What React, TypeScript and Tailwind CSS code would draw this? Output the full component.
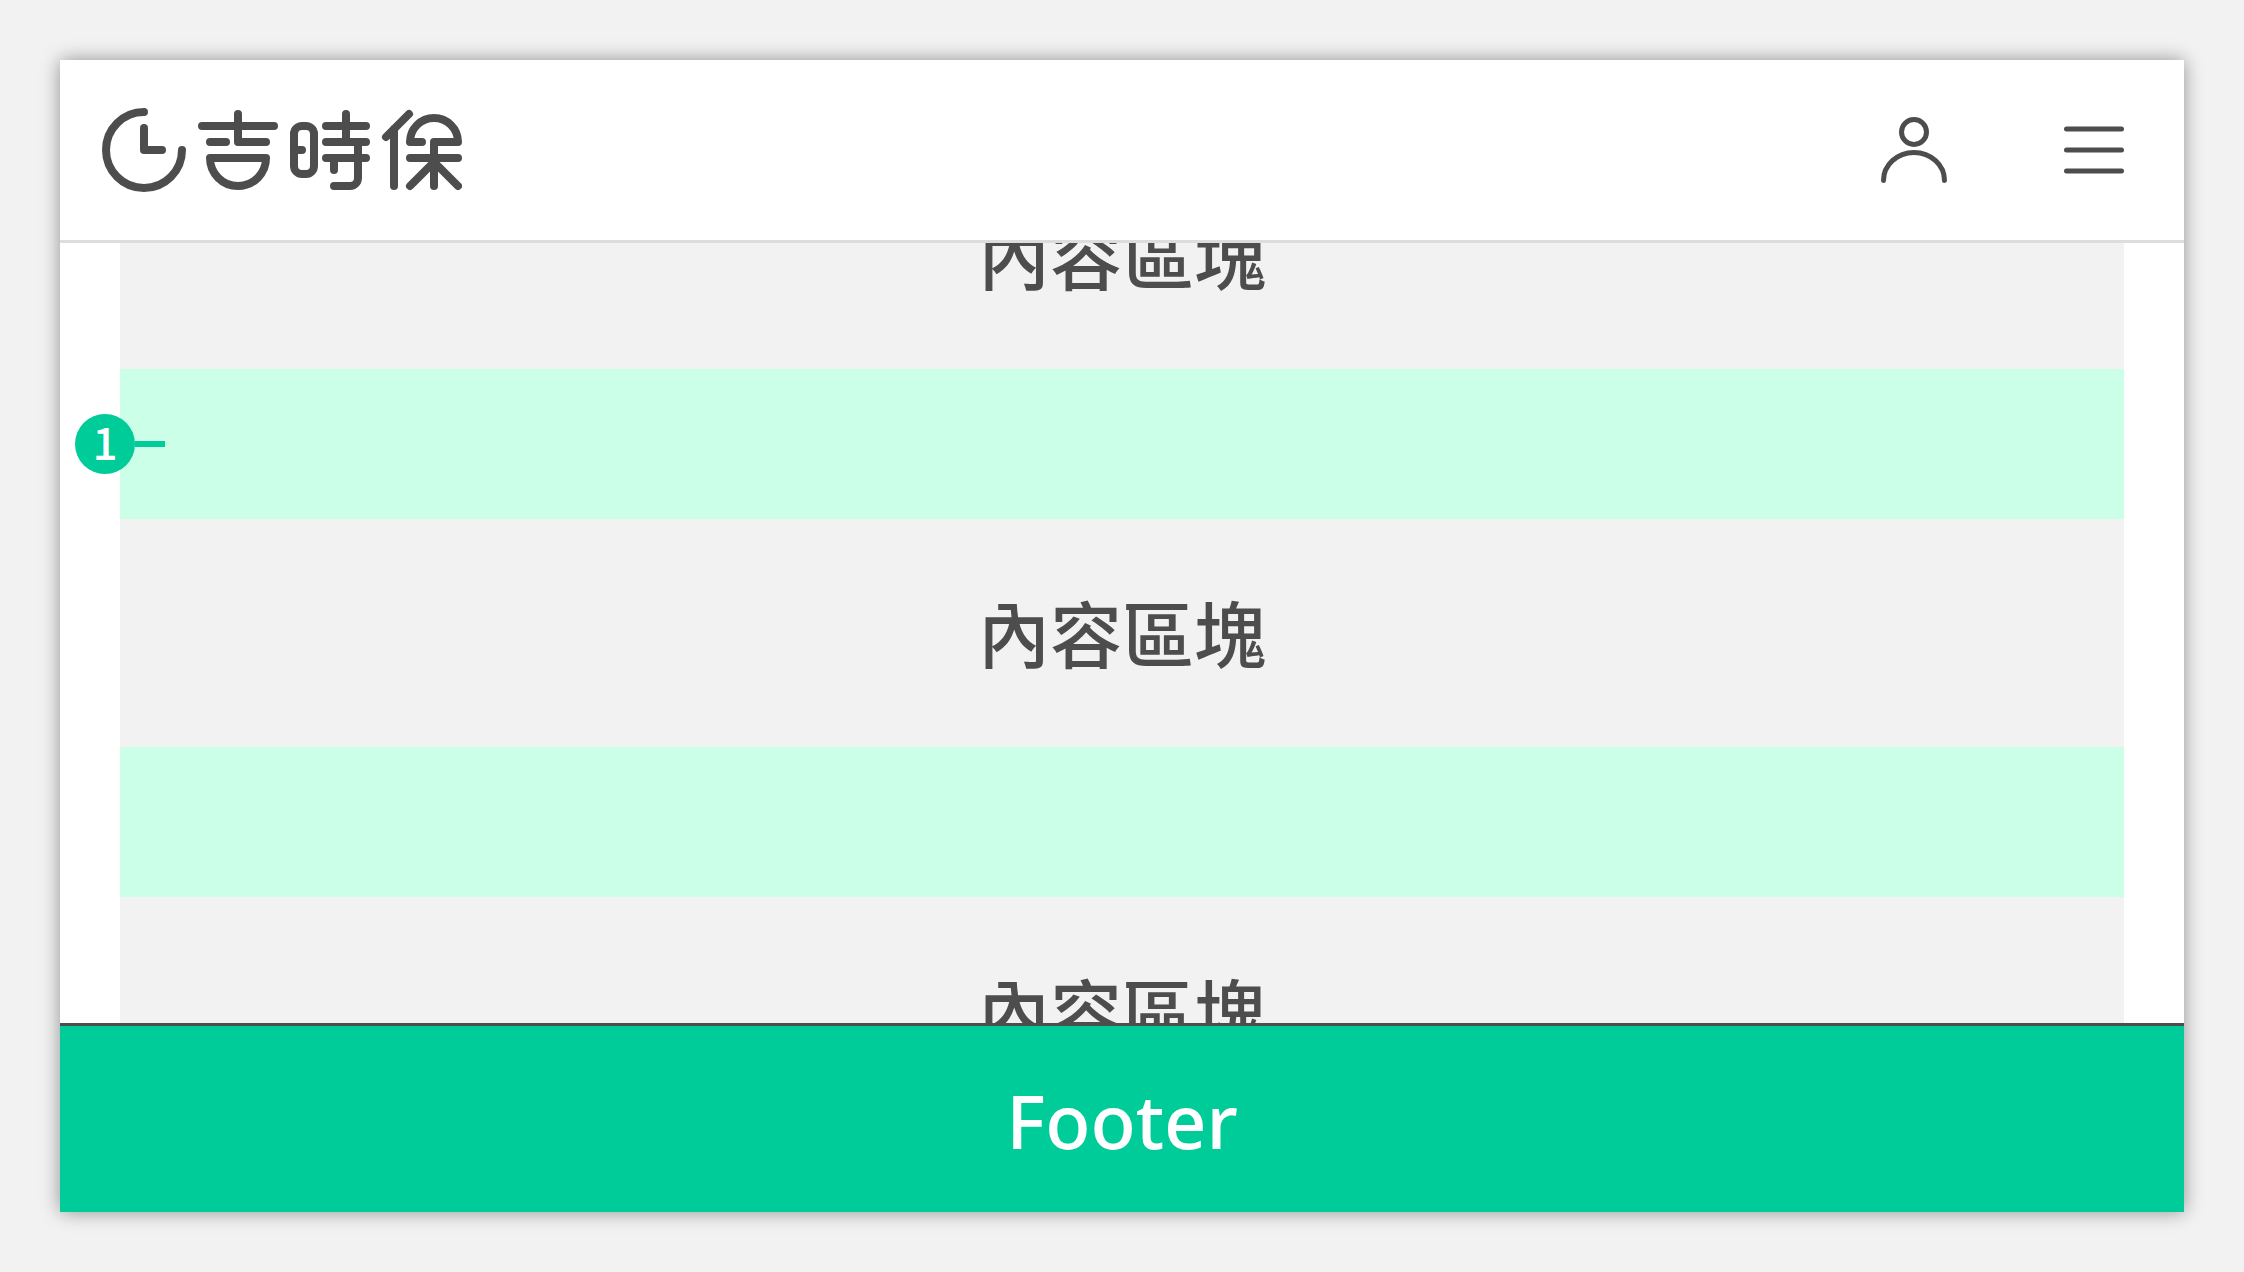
const LABEL = '內容區塊';

function Logo() {
  return (
    <svg
      className="h-[84px] w-[360px]"
      viewBox="0 0 360 84"
      fill="none"
      stroke="currentColor"
      strokeWidth={8}
      strokeLinecap="round"
      strokeLinejoin="round"
      aria-hidden="true"
    >
      {/* Clock */}
      <path d="M42 4A38 38 0 1 0 80 42" />
      <path d="M42 20V42H60" />
      <path d="M100 18H172M136 6V34H164M108 34H124M108 50H164A28 28 0 0 1 108 50Z" />
      <rect x="192" y="18" width="20" height="48" rx="8" />
      <path d="M192 42H200M244 6V34M224 18H264M224 34H264M224 50H264M232 50V62M256 34V70a8 8 0 0 1-8 8H232" />
      <path d="M307 6L284 29M292 21V78M320 34H308A24 24 0 0 1 356 34H332V78M308 50H356M332 54L308 78M332 54L356 78" />
    </svg>
  );
}

function Header() {
  return (
    <header className="flex h-[183px] shrink-0 items-center justify-between border-b-3 border-[#dddddd] bg-white pr-[60px] pl-[42px]">
      <a href="#" aria-label="吉時保">
        <Logo />
      </a>
      <div className="flex items-center gap-[117px]">
        <button type="button" aria-label="會員">
          <svg className="size-[66px]" viewBox="0 0 66 66" fill="none" stroke="currentColor" strokeWidth={5} strokeLinecap="round">
            <circle cx="33" cy="15" r="12.5" />
            <path d="M2.5 63.5A30.5 28 0 0 1 63.5 63.5" />
          </svg>
        </button>
        <button type="button" aria-label="選單">
          <svg className="h-[48px] w-[60px]" viewBox="0 0 60 48" fill="none" stroke="currentColor" strokeWidth={5} strokeLinecap="round">
            <path d="M2.5 3H57.5M2.5 24H57.5M2.5 45H57.5" />
          </svg>
        </button>
      </div>
    </header>
  );
}

function ContentBlock() {
  return (
    <section className="flex h-[228px] shrink-0 items-center justify-center bg-[#f2f2f2] pb-1">
      <h2 className="text-7xl font-medium">{LABEL}</h2>
    </section>
  );
}

function Spacer({ marker }: { marker?: number }) {
  return (
    <div className="relative h-[150px] shrink-0 bg-[#cbffe8]">
      {marker && (
        <div className="absolute top-[45px] left-[-45px] flex items-center">
          <span className="flex size-[60px] items-center justify-center rounded-full bg-[#00cc99] pb-1.5 text-[44px] leading-none font-medium text-white">
            {marker}
          </span>
          <span className="h-[6px] w-[30px] bg-[#00cc99]" />
        </div>
      )}
    </div>
  );
}

export default function App() {
  return (
    <div className="flex h-screen flex-col bg-[#f2f2f2] p-[60px] font-['Noto_Sans_CJK_TC',sans-serif] text-[#4d4d4d]">
      <div className="flex min-h-0 flex-1 flex-col bg-white shadow-[0_0_18px_rgba(0,0,0,0.4)]">
        <Header />
        <main className="flex min-h-0 flex-1 flex-col justify-center overflow-hidden px-[60px]">
          <ContentBlock />
          <Spacer marker={1} />
          <ContentBlock />
          <Spacer />
          <ContentBlock />
        </main>
        <footer className="flex h-[189px] shrink-0 items-center justify-center border-t-3 border-[#4d4d4d] bg-[#00cc99] pt-1">
          <p className="font-['Noto_Sans',sans-serif] text-[74px] leading-none font-medium text-white">Footer</p>
        </footer>
      </div>
    </div>
  );
}
